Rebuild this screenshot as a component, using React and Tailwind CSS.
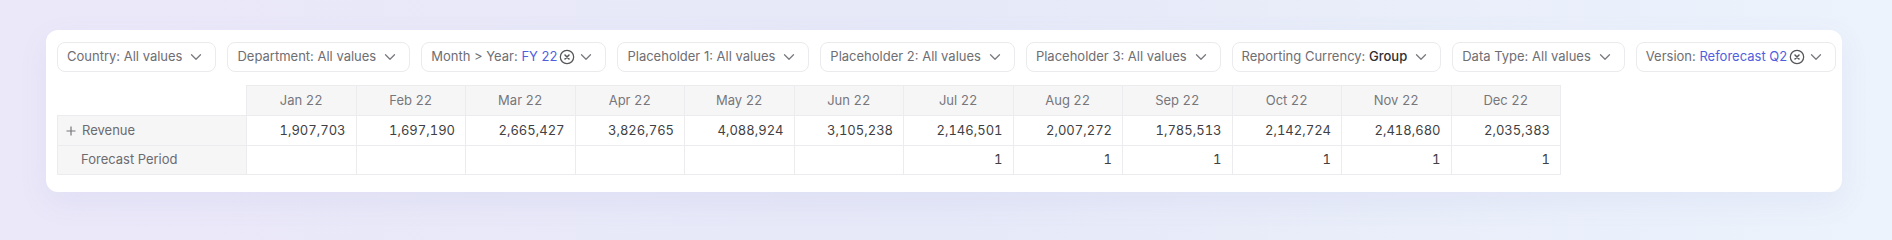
const filters = [
  { label: "Country:", value: "All values" },
  { label: "Department:", value: "All values" },
  { label: "Month > Year:", value: "FY 22", tone: "blue", clearable: true },
  { label: "Placeholder 1:", value: "All values" },
  { label: "Placeholder 2:", value: "All values" },
  { label: "Placeholder 3:", value: "All values" },
  { label: "Reporting Currency:", value: "Group", tone: "dark" },
  { label: "Data Type:", value: "All values" },
  { label: "Version:", value: "Reforecast Q2", tone: "blue", clearable: true },
];

const months = ["Jan 22", "Feb 22", "Mar 22", "Apr 22", "May 22", "Jun 22", "Jul 22", "Aug 22", "Sep 22", "Oct 22", "Nov 22", "Dec 22"];

const revenue = [
  "1,907,703", "1,697,190", "2,665,427", "3,826,765", "4,088,924", "3,105,238",
  "2,146,501", "2,007,272", "1,785,513", "2,142,724", "2,418,680", "2,035,383",
];

const forecast = ["", "", "", "", "", "", "1", "1", "1", "1", "1", "1"];

function ChevronDown() {
  return (
    <svg width="12" height="8" viewBox="0 0 12 8" fill="none" className="shrink-0">
      <path d="M1.5 1.75 6 6.25l4.5-4.5" stroke="#7a7a80" strokeWidth="1.3" strokeLinecap="round" strokeLinejoin="round" />
    </svg>
  );
}

function ClearIcon() {
  return (
    <svg width="16" height="16" viewBox="0 0 24 24" fill="none" className="shrink-0">
      <circle cx="12" cy="12" r="10" stroke="#55555a" strokeWidth="1.9" />
      <path d="m15 9-6 6M9 9l6 6" stroke="#55555a" strokeWidth="2.3" strokeLinecap="round" />
    </svg>
  );
}

function PlusIcon() {
  return (
    <svg width="10" height="10" viewBox="0 0 10 10" fill="none" className="mr-[6px] inline-block align-[-1px]">
      <path d="M5 0.5v9M0.5 5h9" stroke="#77777c" strokeWidth="1.2" />
    </svg>
  );
}

function FilterChip({ label, value, tone, clearable }) {
  const valueClass =
    tone === "blue" ? "text-[#4f5fe0]" : tone === "dark" ? "font-medium text-[#2f2f33]" : "";

  return (
    <button
      type="button"
      className="flex h-[30px] items-center rounded-lg border border-[#ebebed] bg-white pl-[9px] pr-[13px] text-[13px] text-[#6e6e73]"
    >
      <span className="whitespace-nowrap">
        {label} <span className={valueClass}>{value}</span>
      </span>
      {clearable ? (
        <span className="ml-[2px] mr-[5px] flex">
          <ClearIcon />
        </span>
      ) : (
        <span className="w-[8px]" />
      )}
      <ChevronDown />
    </button>
  );
}

export default function App() {
  return (
    <div
      className="h-[240px] w-full overflow-hidden bg-linear-to-r from-[#ebe8f9] via-[#e6e9f8] to-[#ecf3fc] pt-[30px]"
      style={{ fontFamily: "Inter, 'Noto Sans', sans-serif" }}
    >
      <div className="ml-[46px] h-[162px] w-[1796px] rounded-xl bg-white px-[11px] pt-[12px] shadow-[0_10px_30px_rgba(110,120,190,0.08)]">
        <div className="flex items-center gap-[11px]">
          {filters.map((filter) => (
            <FilterChip key={filter.label} {...filter} />
          ))}
        </div>

        <table className="mt-[13px] w-[1504px] table-fixed border-collapse text-[13px] tabular-nums">
          <colgroup>
            <col className="w-[189px]" />
            {months.map((month) => (
              <col key={month} />
            ))}
          </colgroup>
          <thead>
            <tr className="h-[30px]">
              <th className="bg-white" />
              {months.map((month) => (
                <th
                  key={month}
                  className="border border-[#ececee] bg-[#f6f6f7] text-center font-normal text-[#76767b]"
                >
                  {month}
                </th>
              ))}
            </tr>
          </thead>
          <tbody>
            <tr className="h-[30px]">
              <td className="border border-[#ececee] bg-[#f6f6f7] pl-[8px] text-left text-[#6b6b70]">
                <PlusIcon />
                Revenue
              </td>
              {revenue.map((amount, index) => (
                <td key={index} className="border border-[#ececee] pr-[10px] text-right text-[#3f3f44]">
                  {amount}
                </td>
              ))}
            </tr>
            <tr className="h-[29px]">
              <td className="border border-[#ececee] bg-[#f6f6f7] pl-[23px] text-left text-[#6b6b70]">
                Forecast Period
              </td>
              {forecast.map((flag, index) => (
                <td key={index} className="border border-[#ececee] pr-[10px] text-right text-[#3f3f44]">
                  {flag}
                </td>
              ))}
            </tr>
          </tbody>
        </table>
      </div>
    </div>
  );
}
